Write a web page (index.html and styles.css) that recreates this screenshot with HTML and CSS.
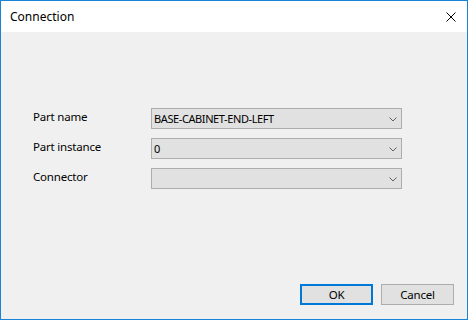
FILE: index.html
```html
<!DOCTYPE html>
<html lang="en">
<head>
  <meta charset="UTF-8" />
  <title>Connection</title>
  <link rel="stylesheet" href="styles.css">
</head>
<body>

<div class="window">
  <div class="titlebar">
    <span class="title">Connection</span>
    <span class="close">
      <svg width="10" height="10" viewBox="0 0 10 10"><path d="M0.5 0.5 L9.5 9.5 M9.5 0.5 L0.5 9.5" stroke="#000" stroke-width="1" fill="none"/></svg>
    </span>
  </div>

  <div class="content">
    <div class="fields">
      <label class="field-label">Part name</label>
      <div class="combo"><span>BASE-CABINET-END-LEFT</span><svg class="chevron" width="8" height="5" viewBox="0 0 8 5"><path d="M0.5 0.5 L4 4 L7.5 0.5" stroke="#606060" fill="none"/></svg></div>

      <label class="field-label">Part instance</label>
      <div class="combo"><span>0</span><svg class="chevron" width="8" height="5" viewBox="0 0 8 5"><path d="M0.5 0.5 L4 4 L7.5 0.5" stroke="#606060" fill="none"/></svg></div>

      <label class="field-label">Connector</label>
      <div class="combo"><span></span><svg class="chevron" width="8" height="5" viewBox="0 0 8 5"><path d="M0.5 0.5 L4 4 L7.5 0.5" stroke="#606060" fill="none"/></svg></div>
    </div>

    <div class="buttons">
      <button class="btn default">OK</button>
      <button class="btn">Cancel</button>
    </div>
  </div>
</div>

</body>
</html>
```

FILE: styles.css
```css
* {
  box-sizing: border-box;
}
body {
  margin: 0;
  font-family: "Noto Sans", "Liberation Sans", sans-serif;
  font-size: 11.5px;
  letter-spacing: -0.2px;
  color: #000;
}
.window {
  width: 468px;
  height: 320px;
  border: 1px solid #1883d7;
  background-color: #f0f0f0;
  display: flex;
  flex-direction: column;
}
.titlebar {
  height: 31px;
  background-color: #fff;
  display: flex;
  align-items: center;
  justify-content: space-between;
  padding: 0 11px 0 9px;
}
.title {
  font-size: 12px;
  letter-spacing: 0;
}
.close {
  display: flex;
  margin-top: 1px;
}
.content {
  flex: 1;
  display: flex;
  flex-direction: column;
  padding: 76px 13px 14px 32px;
}
.fields {
  display: grid;
  grid-template-columns: 118px 251px;
  row-gap: 9px;
}
.field-label {
  line-height: 16px;
  padding-top: 1px;
}
.combo {
  height: 21px;
  border: 1px solid #adadad;
  background-color: #e1e1e1;
  display: flex;
  align-items: center;
  justify-content: space-between;
  padding: 0 4px 0 2px;
  line-height: 16px;
  font-size: 11px;
  letter-spacing: -0.4px;
}
.chevron {
  margin-top: 1px;
}
.buttons {
  margin-top: auto;
  display: flex;
  justify-content: flex-end;
  gap: 8px;
}
.btn {
  width: 73px;
  height: 21px;
  border: 1px solid #adadad;
  background-color: #e1e1e1;
  font-family: inherit;
  font-size: 11.5px;
  letter-spacing: -0.2px;
  padding: 0;
  color: #000;
}
.btn.default {
  border: 2px solid #0078d7;
}
```
